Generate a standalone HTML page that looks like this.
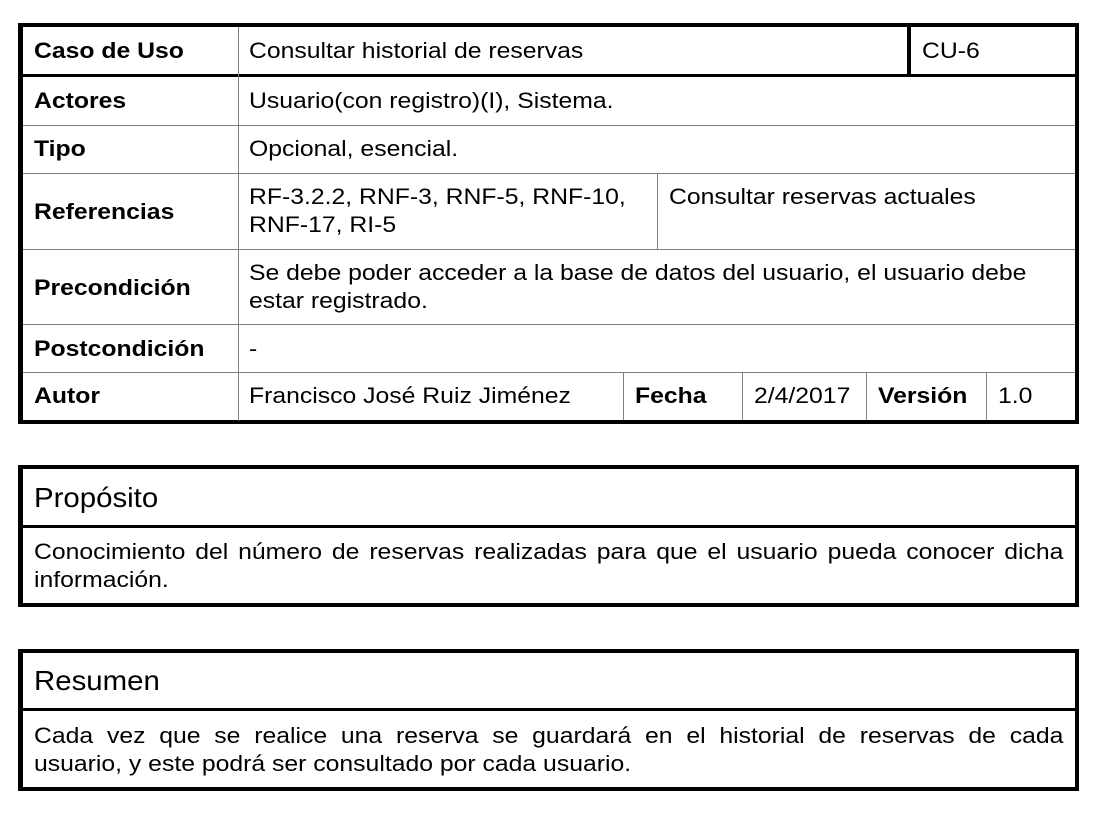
<!DOCTYPE html><html><head><style>
body{margin:0;width:1102px;height:818px;background:#fff;position:relative;font-family:"Liberation Sans",Arial,sans-serif;font-size:22px;color:#000;overflow:hidden}
.b{position:absolute;background:#000}
.g{position:absolute;background:#808080}
.t{position:absolute;white-space:nowrap;line-height:28px;transform:scaleX(1.125);transform-origin:0 0}
.bo{font-weight:bold}
.h{position:absolute;white-space:nowrap;font-size:28px;line-height:32px;transform:scaleX(1.05);transform-origin:0 0}
.j{position:absolute;left:34px;width:915px;line-height:28px;transform:scaleX(1.125);transform-origin:0 0}
.j span{display:block;text-align:justify;text-align-last:justify}
.j span.l{text-align-last:left}
</style></head><body>
<div class="b" style="left:18px;top:23px;width:1061px;height:4px"></div>
<div class="b" style="left:18px;top:420px;width:1061px;height:4px"></div>
<div class="b" style="left:18px;top:23px;width:5px;height:401px"></div>
<div class="b" style="left:1075px;top:23px;width:4px;height:401px"></div>
<div class="b" style="left:18px;top:74px;width:1061px;height:3px"></div>
<div class="b" style="left:907px;top:23px;width:4px;height:53px"></div>
<div class="g" style="left:238px;top:27px;width:1px;height:394px"></div>
<div class="g" style="left:23px;top:125px;width:1052px;height:1px"></div>
<div class="g" style="left:23px;top:173px;width:1052px;height:1px"></div>
<div class="g" style="left:23px;top:249px;width:1052px;height:1px"></div>
<div class="g" style="left:23px;top:324px;width:1052px;height:1px"></div>
<div class="g" style="left:23px;top:372px;width:1052px;height:1px"></div>
<div class="g" style="left:657px;top:173px;width:1px;height:76px"></div>
<div class="g" style="left:623px;top:372px;width:1px;height:48px"></div>
<div class="g" style="left:742px;top:372px;width:1px;height:48px"></div>
<div class="g" style="left:866px;top:372px;width:1px;height:48px"></div>
<div class="g" style="left:986px;top:372px;width:1px;height:48px"></div>

<div class="t bo" style="left:34px;top:37px">Caso de Uso</div>
<div class="t" style="left:249px;top:37px">Consultar historial de reservas</div>
<div class="t" style="left:922px;top:37px">CU-6</div>
<div class="t bo" style="left:34px;top:87px">Actores</div>
<div class="t" style="left:249px;top:87px">Usuario(con registro)(I), Sistema.</div>
<div class="t bo" style="left:34px;top:135px">Tipo</div>
<div class="t" style="left:249px;top:135px">Opcional, esencial.</div>
<div class="t bo" style="left:34px;top:198px">Referencias</div>
<div class="t" style="left:249px;top:183px">RF-3.2.2, RNF-3, RNF-5, RNF-10,<br>RNF-17, RI-5</div>
<div class="t" style="left:669px;top:183px">Consultar reservas actuales</div>
<div class="t bo" style="left:34px;top:274px">Precondición</div>
<div class="t" style="left:249px;top:259px">Se debe poder acceder a la base de datos del usuario, el usuario debe<br>estar registrado.</div>
<div class="t bo" style="left:34px;top:335px">Postcondición</div>
<div class="t" style="left:249px;top:335px">-</div>
<div class="t bo" style="left:34px;top:382px">Autor</div>
<div class="t" style="left:249px;top:382px">Francisco José Ruiz Jiménez</div>
<div class="t bo" style="left:635px;top:382px">Fecha</div>
<div class="t" style="left:754px;top:382px">2/4/2017</div>
<div class="t bo" style="left:878px;top:382px">Versión</div>
<div class="t" style="left:998px;top:382px">1.0</div>

<div class="b" style="left:18px;top:465px;width:1061px;height:4px"></div>
<div class="b" style="left:18px;top:525px;width:1061px;height:3px"></div>
<div class="b" style="left:18px;top:603px;width:1061px;height:4px"></div>
<div class="b" style="left:18px;top:465px;width:5px;height:142px"></div>
<div class="b" style="left:1075px;top:465px;width:4px;height:142px"></div>
<div class="h" style="left:34px;top:482px">Propósito</div>
<div class="j" style="top:538px"><span>Conocimiento del número de reservas realizadas para que el usuario pueda conocer dicha</span><span class="l">información.</span></div>

<div class="b" style="left:18px;top:649px;width:1061px;height:4px"></div>
<div class="b" style="left:18px;top:708px;width:1061px;height:3px"></div>
<div class="b" style="left:18px;top:787px;width:1061px;height:4px"></div>
<div class="b" style="left:18px;top:649px;width:5px;height:142px"></div>
<div class="b" style="left:1075px;top:649px;width:4px;height:142px"></div>
<div class="h" style="left:34px;top:665px">Resumen</div>
<div class="j" style="top:722px"><span>Cada vez que se realice una reserva se guardará en el historial de reservas de cada</span><span class="l">usuario, y este podrá ser consultado por cada usuario.</span></div>
</body></html>
